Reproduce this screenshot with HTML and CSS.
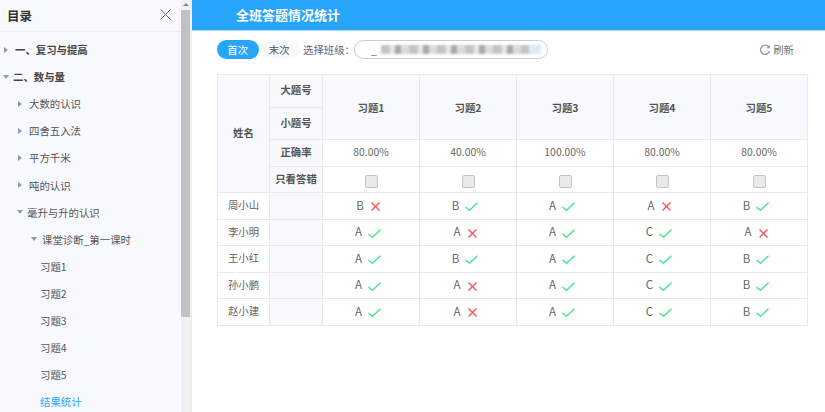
FILE: index.html
```html
<!DOCTYPE html>
<html lang="zh">
<head>
<meta charset="utf-8">
<title>全班答题情况统计</title>
<link rel="stylesheet" href="styles.css">
</head>
<body>
<div class="app">
  <aside class="sidebar">
    <div class="side-head">
      <span class="side-title">目录</span>
      <svg class="close" width="11" height="11" viewBox="0 0 11 11"><path d="M.5 .5l10 10M10.5 .5l-10 10" stroke="#666" stroke-width="1" fill="none"/></svg>
    </div>
    <ul class="tree">
      <li class="node l1 bold"><i class="tri right"></i>一、复习与提高</li>
      <li class="node l1 bold"><i class="tri down"></i>二、数与量</li>
      <li class="node l2"><i class="tri right"></i>大数的认识</li>
      <li class="node l2"><i class="tri right"></i>四舍五入法</li>
      <li class="node l2"><i class="tri right"></i>平方千米</li>
      <li class="node l2"><i class="tri right"></i>吨的认识</li>
      <li class="node l2"><i class="tri down"></i>毫升与升的认识</li>
      <li class="node l3"><i class="tri down"></i>课堂诊断_第一课时</li>
      <li class="node l4">习题1</li>
      <li class="node l4">习题2</li>
      <li class="node l4">习题3</li>
      <li class="node l4">习题4</li>
      <li class="node l4">习题5</li>
      <li class="node l4 active">结果统计</li>
    </ul>
  </aside>
  <div class="scrollbar">
    <div class="sb-arrow"></div>
    <div class="sb-thumb"></div>
  </div>
  <main class="main">
    <header class="banner">全班答题情况统计</header>
    <div class="toolbar">
      <span class="pill on">首次</span>
      <span class="pill">末次</span>
      <span class="label">选择班级：</span>
      <div class="select"><span class="blurred">_</span><span class="blur-bar"></span></div>
      <span class="refresh">
        <svg width="12" height="12" viewBox="0 0 12 12"><path d="M10 3.2A4.6 4.6 0 1 0 10.6 7" stroke="#8c9bb0" stroke-width="1.4" fill="none"/><path d="M10.8 .8v3.4H7.4z" fill="#8c9bb0"/></svg>刷新
      </span>
    </div>
    <table class="stats">
      <colgroup>
        <col class="c-name"><col class="c-key"><col class="c-q"><col class="c-q"><col class="c-q"><col class="c-q"><col class="c-q">
      </colgroup>
      <tr class="r-h">
        <th rowspan="4">姓名</th><th>大题号</th>
        <th class="q" rowspan="2">习题1</th><th class="q" rowspan="2">习题2</th><th class="q" rowspan="2">习题3</th><th class="q" rowspan="2">习题4</th><th class="q" rowspan="2">习题5</th>
      </tr>
      <tr class="r-h"><th>小题号</th></tr>
      <tr class="r-m">
        <th>正确率</th><td>80.00%</td><td>40.00%</td><td>100.00%</td><td>80.00%</td><td>80.00%</td>
      </tr>
      <tr class="r-m">
        <th>只看答错</th>
        <td><i class="box"></i></td><td><i class="box"></i></td><td><i class="box"></i></td><td><i class="box"></i></td><td><i class="box"></i></td>
      </tr>
      <tr class="r-m r-a">
        <td class="who">周小山</td><td class="shade"></td>
        <td>B<svg class="x" viewBox="0 0 9 9"><path d="M.5 .5l8 8M8.5 .5l-8 8"/></svg></td>
        <td>B<svg class="ok" viewBox="0 0 13 9"><path d="M.5 5L4.5 8.3 12.5 .7"/></svg></td>
        <td>A<svg class="ok" viewBox="0 0 13 9"><path d="M.5 5L4.5 8.3 12.5 .7"/></svg></td>
        <td>A<svg class="x" viewBox="0 0 9 9"><path d="M.5 .5l8 8M8.5 .5l-8 8"/></svg></td>
        <td>B<svg class="ok" viewBox="0 0 13 9"><path d="M.5 5L4.5 8.3 12.5 .7"/></svg></td>
      </tr>
      <tr class="r-m r-a">
        <td class="who">李小明</td><td class="shade"></td>
        <td>A<svg class="ok" viewBox="0 0 13 9"><path d="M.5 5L4.5 8.3 12.5 .7"/></svg></td>
        <td>A<svg class="x" viewBox="0 0 9 9"><path d="M.5 .5l8 8M8.5 .5l-8 8"/></svg></td>
        <td>A<svg class="ok" viewBox="0 0 13 9"><path d="M.5 5L4.5 8.3 12.5 .7"/></svg></td>
        <td>C<svg class="ok" viewBox="0 0 13 9"><path d="M.5 5L4.5 8.3 12.5 .7"/></svg></td>
        <td>A<svg class="x" viewBox="0 0 9 9"><path d="M.5 .5l8 8M8.5 .5l-8 8"/></svg></td>
      </tr>
      <tr class="r-m r-a">
        <td class="who">王小红</td><td class="shade"></td>
        <td>A<svg class="ok" viewBox="0 0 13 9"><path d="M.5 5L4.5 8.3 12.5 .7"/></svg></td>
        <td>B<svg class="ok" viewBox="0 0 13 9"><path d="M.5 5L4.5 8.3 12.5 .7"/></svg></td>
        <td>A<svg class="ok" viewBox="0 0 13 9"><path d="M.5 5L4.5 8.3 12.5 .7"/></svg></td>
        <td>C<svg class="ok" viewBox="0 0 13 9"><path d="M.5 5L4.5 8.3 12.5 .7"/></svg></td>
        <td>B<svg class="ok" viewBox="0 0 13 9"><path d="M.5 5L4.5 8.3 12.5 .7"/></svg></td>
      </tr>
      <tr class="r-m r-a">
        <td class="who">孙小鹏</td><td class="shade"></td>
        <td>A<svg class="ok" viewBox="0 0 13 9"><path d="M.5 5L4.5 8.3 12.5 .7"/></svg></td>
        <td>A<svg class="x" viewBox="0 0 9 9"><path d="M.5 .5l8 8M8.5 .5l-8 8"/></svg></td>
        <td>A<svg class="ok" viewBox="0 0 13 9"><path d="M.5 5L4.5 8.3 12.5 .7"/></svg></td>
        <td>C<svg class="ok" viewBox="0 0 13 9"><path d="M.5 5L4.5 8.3 12.5 .7"/></svg></td>
        <td>B<svg class="ok" viewBox="0 0 13 9"><path d="M.5 5L4.5 8.3 12.5 .7"/></svg></td>
      </tr>
      <tr class="r-m r-a">
        <td class="who">赵小建</td><td class="shade"></td>
        <td>A<svg class="ok" viewBox="0 0 13 9"><path d="M.5 5L4.5 8.3 12.5 .7"/></svg></td>
        <td>A<svg class="x" viewBox="0 0 9 9"><path d="M.5 .5l8 8M8.5 .5l-8 8"/></svg></td>
        <td>A<svg class="ok" viewBox="0 0 13 9"><path d="M.5 5L4.5 8.3 12.5 .7"/></svg></td>
        <td>C<svg class="ok" viewBox="0 0 13 9"><path d="M.5 5L4.5 8.3 12.5 .7"/></svg></td>
        <td>B<svg class="ok" viewBox="0 0 13 9"><path d="M.5 5L4.5 8.3 12.5 .7"/></svg></td>
      </tr>
    </table>
  </main>
</div>
</body>
</html>
```

FILE: styles.css
```css
* { box-sizing: border-box; }
html, body { margin: 0; height: 100%; overflow: hidden; }
body {
  font-family: "Noto Sans CJK SC", "Noto Sans", sans-serif;
  font-size: 10.4px;
  color: #555;
  background: #fff;
}
.app { display: flex; width: 825px; height: 412px; overflow: hidden; }

/* sidebar */
.sidebar { width: 181px; height: 412px; background: #f8f9fd; overflow: hidden; flex: none; }
.side-head {
  height: 32px;
  padding: 0 10px 0 7px;
  display: flex;
  align-items: center;
  justify-content: space-between;
  border-bottom: 1px solid #eeeff3;
}
.side-title { font-size: 12.5px; font-weight: 700; color: #333; }
.close { margin-bottom: 2px; }
.tree { list-style: none; margin: 4px 0 0; padding: 0; }
.node { height: 27.12px; display: flex; align-items: center; white-space: nowrap; color: #555; }
.node.bold { font-weight: 700; color: #444; }
.l1 { padding-left: 4px; }
.l2 { padding-left: 18px; }
.l3 { padding-left: 32px; }
.l4 { padding-left: 40px; }
.active { color: #27a5fb; }
.tri { display: block; flex: none; width: 0; height: 0; }
.tri.right { border-left: 4px solid #8c9bb0; border-top: 3.5px solid transparent; border-bottom: 3.5px solid transparent; margin-right: 7px; }
.tri.down { border-top: 4px solid #8c9bb0; border-left: 3.5px solid transparent; border-right: 3.5px solid transparent; margin-right: 4px; margin-left: -1px; }
.l3 .tri.down { margin-right: 5px; }

/* scrollbar */
.scrollbar { width: 11px; flex: none; background: #f1f1f1; border-right: 1px solid #eceef2; display: flex; flex-direction: column; }
.sb-arrow { height: 10px; position: relative; }
.sb-arrow::after {
  content: "";
  position: absolute;
  left: 2px; top: 3px;
  border-bottom: 3px solid #8a8a8a;
  border-left: 3px solid transparent;
  border-right: 3px solid transparent;
}
.sb-thumb { height: 307px; background: #c1c1c1; width: 9px; }

/* main */
.main { flex: 1; min-width: 0; display: flex; flex-direction: column; }
.banner {
  height: 31px;
  background: #27a5fb;
  color: #fff;
  font-size: 13px;
  font-weight: 700;
  line-height: 30px;
  padding-left: 44px;
  border-bottom: 1px solid #a8dcff;
}
.toolbar {
  height: 43px;
  padding: 9px 31px 0 25px;
  display: flex;
  align-items: flex-start;
}
.pill {
  width: 41.5px;
  height: 19px;
  border-radius: 10px;
  line-height: 19px;
  text-align: center;
  background: #f8f9fd;
  color: #555;
}
.pill.on { background: #27a5fb; color: #fff; }
.label { margin-left: 3px; line-height: 19px; width: 51px; color: #5f6675; white-space: nowrap; }
.select {
  width: 194px;
  height: 19px;
  border: 1px solid #c8cbdc;
  border-radius: 10px;
  display: flex;
  align-items: center;
  padding-left: 16px;
  color: #666;
  overflow: hidden;
}
.blurred { width: 10px; line-height: 14px; }
.blur-bar {
  width: 160px;
  height: 9px;
  filter: blur(1px);
  background:
    linear-gradient(90deg, transparent 0 148px, #d8ecf8 148px 160px),
    repeating-linear-gradient(90deg, #c4c4c4 0 9px, #e6e6e6 9px 14px, #a9a9a9 14px 20px, #dcdcdc 20px 28px);
}
.refresh {
  margin-left: auto;
  display: flex;
  align-items: center;
  gap: 2px;
  line-height: 19px;
  color: #777;
}

/* table */
.stats {
  margin-left: 25px;
  width: 590px;
  table-layout: fixed;
  border-collapse: collapse;
  font-size: 10.4px;
  color: #666;
}
.c-name { width: 52px; }
.c-key { width: 53px; }
.c-q { width: 97px; }
.stats th, .stats td {
  border: 1px solid #e8e9ed;
  padding: 0 0 2px;
  text-align: center;
  vertical-align: middle;
  white-space: nowrap;
}
.stats th { background: #f8f9fd; font-weight: 700; color: #555; }
.stats th.q { padding-bottom: 0; }
.stats td.shade { background: #f8f9fd; }
.r-h { height: 32.5px; }
.r-m { height: 26.5px; }
.r-a td { font-size: 11.5px; }
.r-a td.who { font-size: 10.4px; }
.box {
  display: inline-block;
  width: 13px;
  height: 13px;
  vertical-align: middle;
  margin-top: 6px;
  background: #e9e9e9;
  border: 1px solid #c4c4c4;
  border-radius: 2px;
}
.ok, .x { display: inline-block; vertical-align: -1.5px; fill: none; }
.ok { width: 13px; height: 9px; margin: 0 6px 0 6px; stroke: #3ce27d; stroke-width: 1.2; }
.x { width: 9px; height: 9px; margin: 0 6px 0 7px; stroke: #f8525b; stroke-width: 1.4; }
```
